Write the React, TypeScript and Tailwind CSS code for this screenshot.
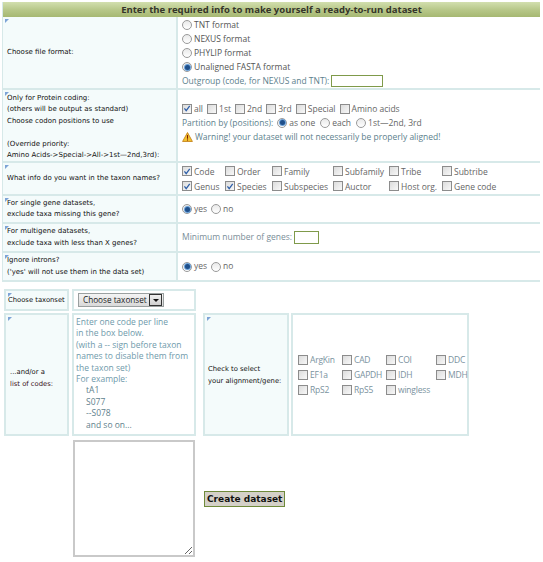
import React from "react";

const labelFont = { fontFamily: '"DejaVu Sans", Verdana, sans-serif' };
const bodyFont = { fontFamily: '"Open Sans", "DejaVu Sans", sans-serif' };

const Marker: React.FC = () => (
  <span className="absolute left-[2px] top-[2px] w-0 h-0 border-t-[4px] border-t-[#7da3d6] border-r-[4px] border-r-transparent" />
);

const Radio: React.FC<{ checked?: boolean }> = ({ checked }) => (
  <span className="inline-flex items-center justify-center w-[10px] h-[10px] rounded-full border border-[#9a9a9a] bg-gradient-to-b from-[#e9e9e9] to-[#ffffff] mr-[2px] shrink-0">
    {checked && <span className="w-[5px] h-[5px] rounded-full bg-[#1f4f8a] ring-1 ring-[#6aa0d8]" />}
  </span>
);

const Check: React.FC<{ checked?: boolean }> = ({ checked }) => (
  <span className="relative inline-flex items-center justify-center w-[10px] h-[10px] border border-[#8c8c8c] bg-gradient-to-br from-[#dcdcdc] to-[#f8f8f8] mr-[2px] shrink-0">
    {checked && (
      <svg viewBox="0 0 10 10" className="w-[9px] h-[9px]">
        <path d="M1.8 4.8 L4 7.6 L8.4 1.6" fill="none" stroke="#2f5fa8" strokeWidth="1.6" />
      </svg>
    )}
  </span>
);

const Row: React.FC<{ h: string; label: React.ReactNode; children: React.ReactNode }> = ({ h, label, children }) => (
  <div className={`flex ${h} border-b-2 border-[#d7e9e9]`}>
    <div
      className="relative w-[175px] shrink-0 bg-[#f4fbfb] border-r-2 border-[#d7e9e9] flex items-center pl-[4px] text-[7px] leading-[11.5px] text-[#111]"
      style={labelFont}
    >
      <Marker />
      <div>{label}</div>
    </div>
    <div className="flex-1 flex items-center pl-[4px] text-[8.5px] text-[#5d7f8d]" style={bodyFont}>
      {children}
    </div>
  </div>
);

const Opt: React.FC<{ checked?: boolean; children: React.ReactNode; radio?: boolean; className?: string }> = ({
  checked,
  children,
  radio,
  className,
}) => (
  <span className={`inline-flex items-center whitespace-nowrap ${className ?? ""}`}>
    {radio ? <Radio checked={checked} /> : <Check checked={checked} />}
    {children}
  </span>
);

export default function App() {
  const taxonFields = [
    ["Code", true],
    ["Order", false],
    ["Family", false],
    ["Subfamily", false],
    ["Tribe", false],
    ["Subtribe", false],
    ["Genus", true],
    ["Species", true],
    ["Subspecies", false],
    ["Auctor", false],
    ["Host org.", false],
    ["Gene code", false],
  ] as const;

  const genes = ["ArgKin", "CAD", "COI", "DDC", "EF1a", "GAPDH", "IDH", "MDH", "RpS2", "RpS5", "wingless"];

  return (
    <div className="w-[543px] h-[562px] bg-white overflow-hidden pt-[2px]">
      <div className="ml-[2px] w-[538px] border-l border-[#d7e9e9]">
        <div
          className="h-[15px] bg-gradient-to-b from-[#d2dfae] via-[#b8c88a] to-[#a6b872] text-center text-[9.5px] font-bold leading-[15px] text-[#35352a]"
          style={{ fontFamily: '"Open Sans", sans-serif' }}
        >
          Enter the required info to make yourself a ready-to-run dataset
        </div>

        <Row h="h-[73px]" label="Choose file format:">
          <div className="flex flex-col leading-[14px] pt-[1px]">
            <Opt radio className="text-[#555]">TNT format</Opt>
            <Opt radio className="text-[#555]">NEXUS format</Opt>
            <Opt radio className="text-[#555]">PHYLIP format</Opt>
            <Opt radio checked className="text-[#555]">
              Unaligned FASTA format
            </Opt>
            <span className="inline-flex items-center">
              Outgroup (code, for NEXUS and TNT):
              <span className="ml-[2px] inline-block w-[52px] h-[12px] border border-[#7f9a4a] bg-white" />
            </span>
          </div>
        </Row>

        <Row
          h="h-[73px]"
          label={
            <div className="pt-[3px]">
              Only for Protein coding:
              <br />
              (others will be output as standard)
              <br />
              Choose codon positions to use
              <br />
              <br />
              (Override priority:
              <br />
              Amino Acids-&gt;Special-&gt;All-&gt;1st—2nd,3rd):
            </div>
          }
        >
          <div className="flex flex-col leading-[14px] -mt-[6px]">
            <div className="flex items-center gap-[4px] text-[#666]">
              <Opt checked>all</Opt>
              <Opt>1st</Opt>
              <Opt>2nd</Opt>
              <Opt>3rd</Opt>
              <Opt>Special</Opt>
              <Opt>Amino acids</Opt>
            </div>
            <div className="flex items-center">
              <span className="mr-[4px]">Partition by (positions):</span>
              <Opt radio checked className="mr-[5px] text-[#666]">
                as one
              </Opt>
              <Opt radio className="mr-[5px] text-[#666]">
                each
              </Opt>
              <Opt radio className="text-[#666]">
                1st—2nd, 3rd
              </Opt>
            </div>
            <div className="flex items-center">
              <svg viewBox="0 0 12 11" className="w-[11px] h-[10px] mr-[2px]">
                <path d="M6 0.6 L11.4 10.4 L0.6 10.4 Z" fill="#f4c430" stroke="#c07a10" strokeWidth="0.9" />
                <rect x="5.4" y="3.4" width="1.2" height="4" fill="#7a1a00" />
                <rect x="5.4" y="8.2" width="1.2" height="1.2" fill="#7a1a00" />
              </svg>
              Warning! your dataset will not necessarily be properly aligned!
            </div>
          </div>
        </Row>

        <Row h="h-[33px]" label="What info do you want in the taxon names?">
          <div className="grid grid-cols-[43px_47px_61px_56px_53px_auto] leading-[15px] text-[#666]">
            {taxonFields.map(([name, on]) => (
              <Opt key={name} checked={on}>
                {name}
              </Opt>
            ))}
          </div>
        </Row>

        <Row
          h="h-[28px]"
          label={
            <>
              For single gene datasets,
              <br />
              exclude taxa missing this gene?
            </>
          }
        >
          <div className="flex items-center text-[#666]">
            <Opt radio checked className="mr-[4px]">
              yes
            </Opt>
            <Opt radio>no</Opt>
          </div>
        </Row>

        <Row
          h="h-[29px]"
          label={
            <>
              For multigene datasets,
              <br />
              exclude taxa with less than X genes?
            </>
          }
        >
          <span className="text-[#7a8e98]">Minimum number of genes:</span>
          <span className="ml-[2px] inline-block w-[25px] h-[13px] border border-[#7f9a4a] bg-white" />
        </Row>

        <Row
          h="h-[29px]"
          label={
            <>
              Ignore introns?
              <br />
              ('yes' will not use them in the data set)
            </>
          }
        >
          <div className="flex items-center text-[#666]">
            <Opt radio checked className="mr-[4px]">
              yes
            </Opt>
            <Opt radio>no</Opt>
          </div>
        </Row>
      </div>

      <div className="mt-[7px] ml-[4px] flex flex-col gap-[2px]">
        <div className="flex gap-[3px]">
          <div
            className="relative w-[65px] h-[22px] border-2 border-[#d7e9e9] bg-[#f4fbfb] flex items-center pl-[2px] text-[6.8px] text-[#111]"
            style={labelFont}
          >
            <Marker />
            Choose taxonset
          </div>
          <div className="w-[124px] h-[22px] border-2 border-[#d7e9e9] bg-white flex items-center pl-[4px]">
            <div
              className="flex items-center h-[14px] w-[86px] border border-[#9aa0a0] bg-gradient-to-b from-[#f4f4f4] to-[#d9d9d9] pl-[4px] text-[8.2px] text-[#222] whitespace-nowrap"
              style={bodyFont}
            >
              <span className="flex-1">Choose taxonset</span>
              <span className="w-[13px] h-[12px] mr-[1px] border border-[#333] bg-gradient-to-b from-[#f0f0f0] to-[#cfcfcf] flex items-center justify-center shrink-0">
                <span className="w-0 h-0 border-l-[3px] border-r-[3px] border-t-[3px] border-l-transparent border-r-transparent border-t-[#111]" />
              </span>
            </div>
          </div>
        </div>

        <div className="flex">
          <div
            className="relative w-[65px] h-[123px] border-2 border-[#d7e9e9] bg-[#f4fbfb] flex items-center pl-[4px] text-[6.8px] leading-[12px] text-[#111]"
            style={labelFont}
          >
            <Marker />
            <div className="mt-[6px]">
              ...and/or a
              <br />
              <span className="text-[#3a1020]">list of codes:</span>
            </div>
          </div>
          <div
            className="ml-[3px] w-[124px] h-[123px] border-2 border-[#d7e9e9] bg-white pl-[2px] pt-[1px] text-[8.5px] leading-[11.4px] text-[#6f9aab]"
            style={bodyFont}
          >
            Enter one code per line
            <br />
            in the box below.
            <br />
            (with a -- sign before taxon
            <br />
            names to disable them from
            <br />
            the taxon set)
            <br />
            For example:
            <div className="pl-[10px] text-[#5f7f8d]">
              tA1
              <br />
              S077
              <br />
              --S078
              <br />
              and so on...
            </div>
          </div>
          <div
            className="relative ml-[7px] w-[86px] h-[123px] border-2 border-[#d7e9e9] bg-[#f4fbfb] flex items-center pl-[3px] text-[6.8px] leading-[12px] text-[#111]"
            style={labelFont}
          >
            <Marker />
            <div>
              Check to select
              <br />
              your alignment/gene:
            </div>
          </div>
          <div className="ml-[2px] w-[178px] h-[123px] border-2 border-[#d7e9e9] bg-white flex items-center pl-[5px]">
            <div
              className="grid grid-cols-[44px_44px_50px_auto] leading-[15px] text-[8.5px] tracking-[-0.2px] text-[#7a929e]"
              style={bodyFont}
            >
              {genes.map((g) => (
                <Opt key={g}>{g}</Opt>
              ))}
            </div>
          </div>
        </div>

        <div className="flex items-center mt-[2px]">
          <textarea className="ml-[69px] w-[122px] h-[117px] border-2 border-[#c9c9c9] bg-white resize" />
          <button
            className="ml-[9px] h-[16px] px-[2px] border border-[#6f8a3a] bg-[#d4d0c8] text-[9px] font-bold leading-[14px] text-[#111]"
            style={labelFont}
          >
            Create dataset
          </button>
        </div>
      </div>
    </div>
  );
}
